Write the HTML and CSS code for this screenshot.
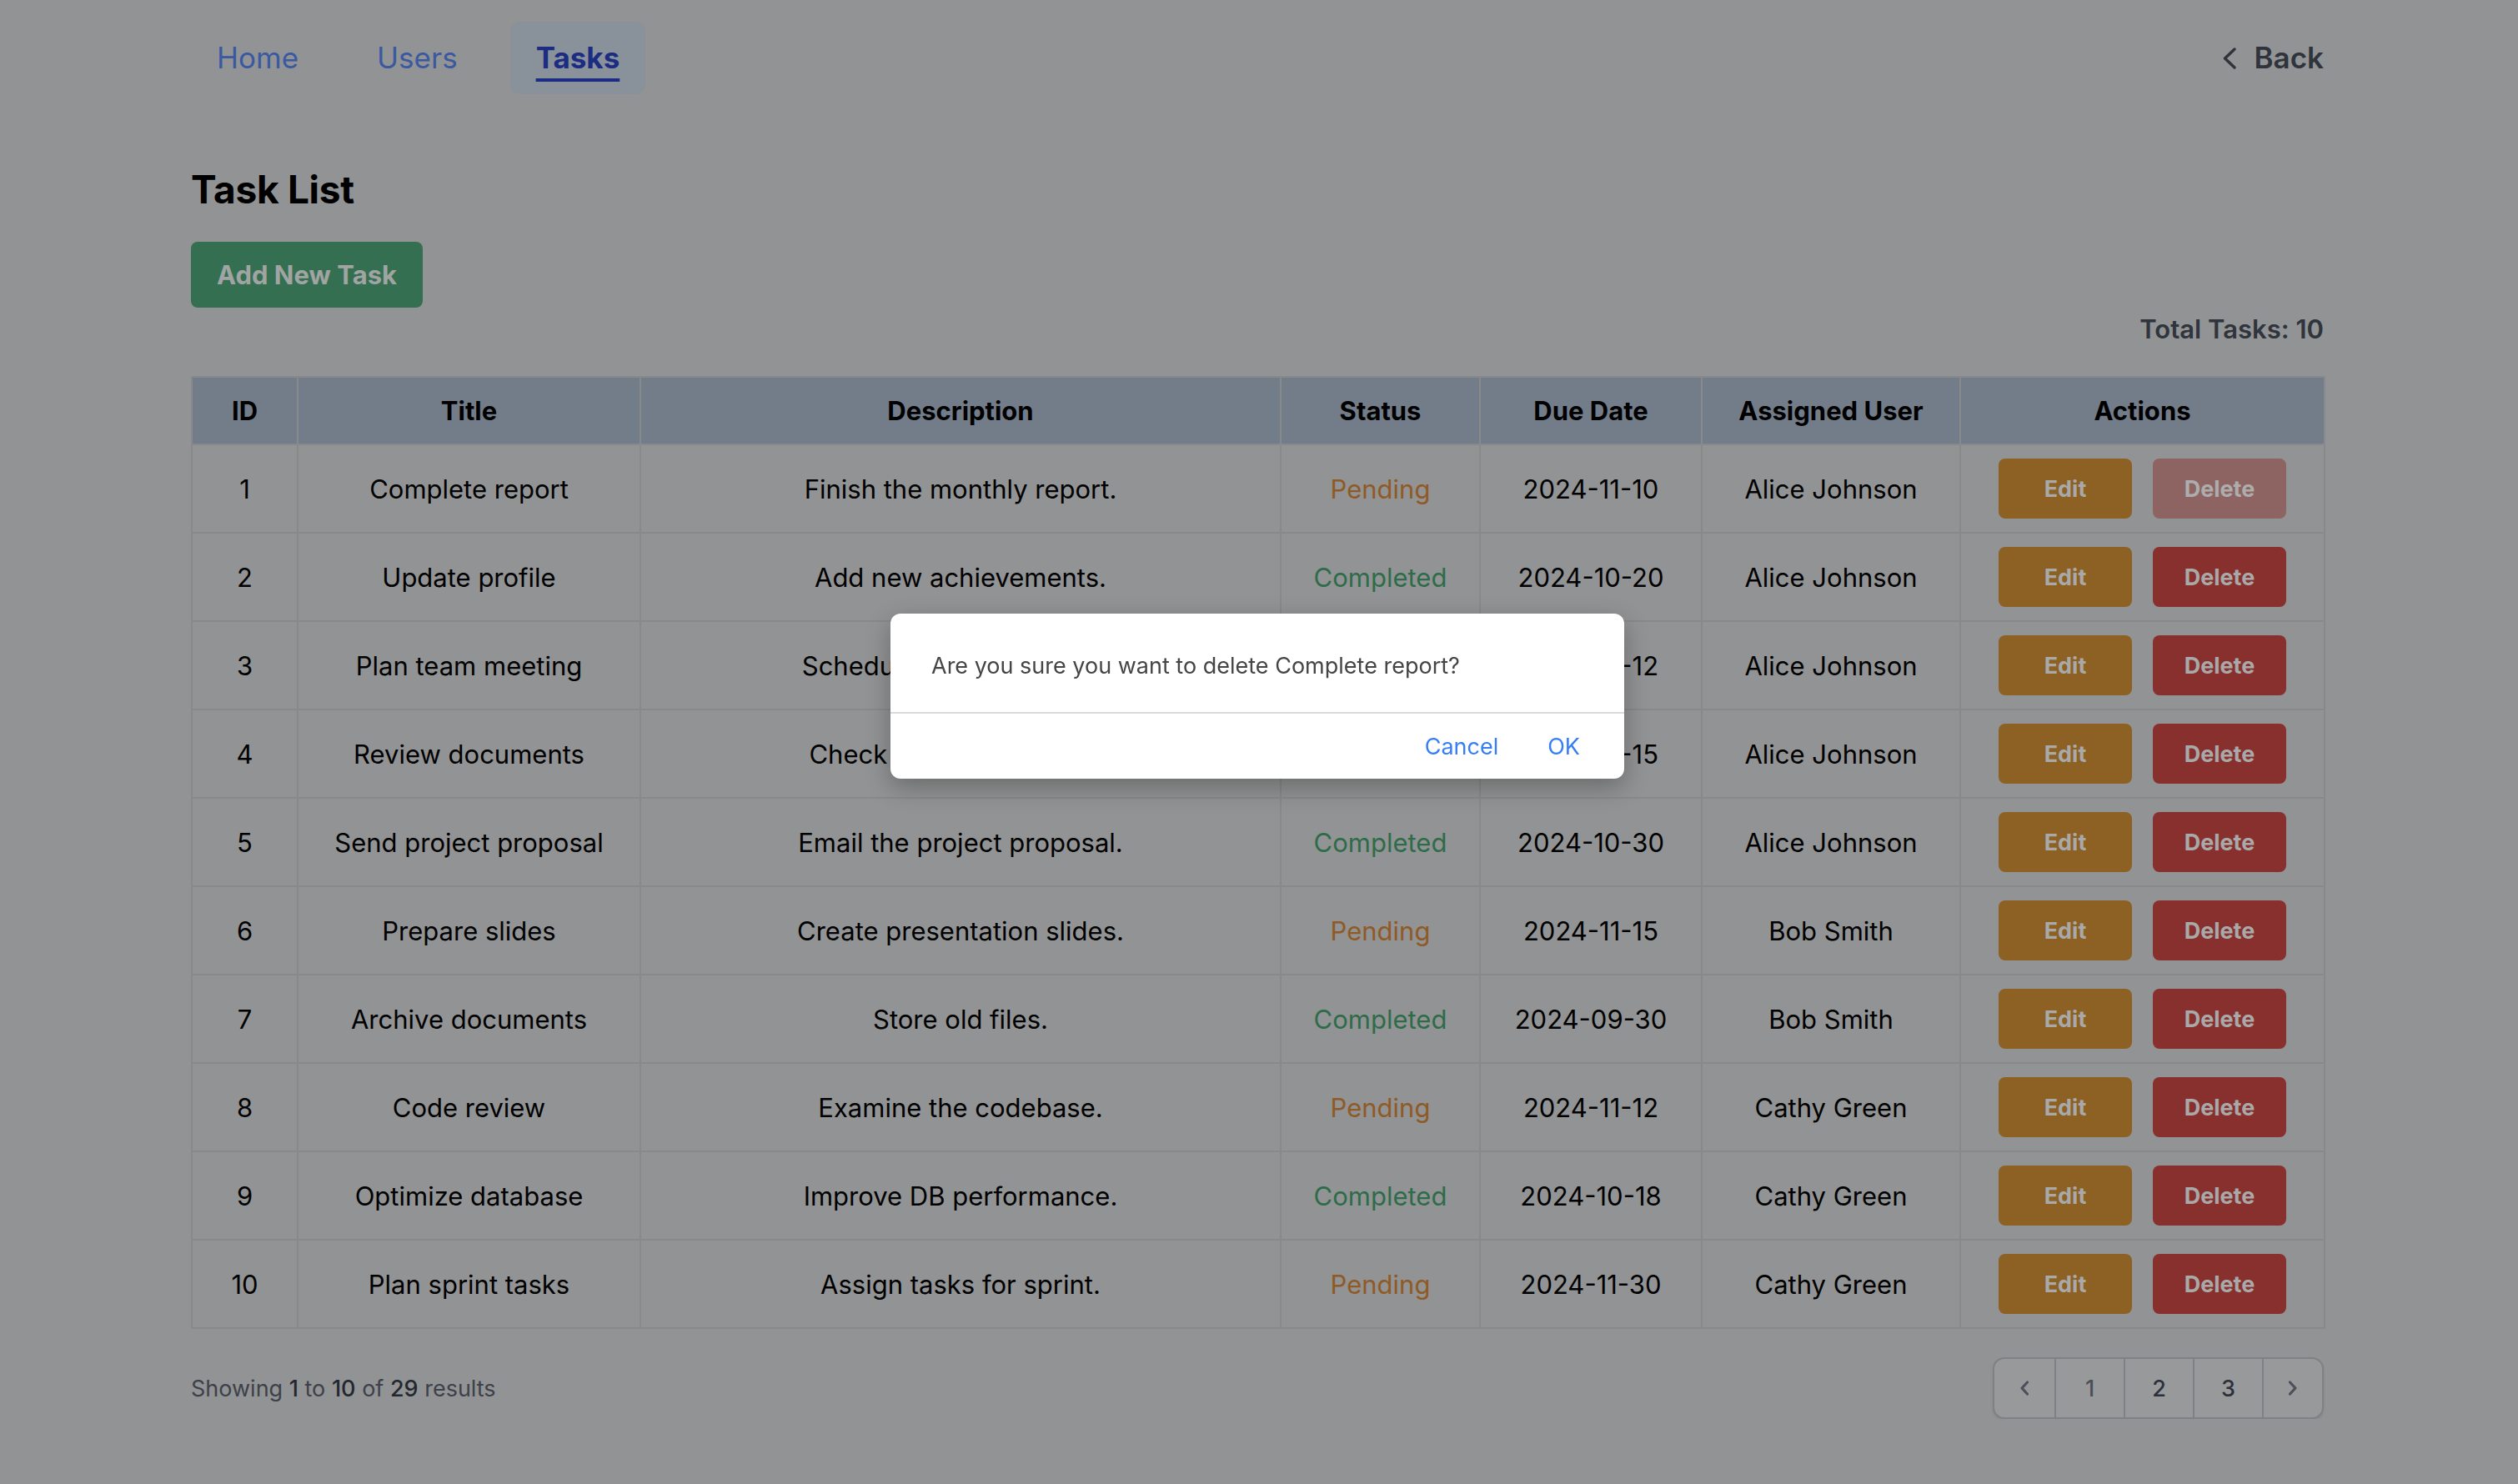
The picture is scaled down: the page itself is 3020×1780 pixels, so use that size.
FILE: index.html
```html
<!DOCTYPE html>
<html lang="en">
<head>
<meta charset="utf-8">
<title>Task List</title>
<link rel="stylesheet" href="styles.css">
</head>
<body>
<div class="page">
  <header class="topnav">
    <nav class="nav-links">
      <a class="nav-link" href="#">Home</a>
      <a class="nav-link" href="#">Users</a>
      <a class="nav-link is-active" href="#">Tasks</a>
    </nav>
    <a class="back" href="#">
      <svg class="back-icon" width="18" height="26" viewBox="0 0 18 26" aria-hidden="true"><path d="M15 2 L3.5 13 L15 24" fill="none" stroke="currentColor" stroke-width="3.4" stroke-linecap="round" stroke-linejoin="round"/></svg>
      <span>Back</span>
    </a>
  </header>

  <main class="content">
    <h1 class="title">Task List</h1>
    <div class="toolbar">
      <button class="btn-add" type="button">Add New Task</button>
    </div>
    <div class="total">Total Tasks: 10</div>

    <table class="tasks">
      <colgroup>
        <col class="c-id"><col class="c-title"><col class="c-desc"><col class="c-status"><col class="c-due"><col class="c-user"><col class="c-actions">
      </colgroup>
      <thead>
        <tr><th>ID</th><th>Title</th><th>Description</th><th>Status</th><th>Due Date</th><th>Assigned User</th><th>Actions</th></tr>
      </thead>
      <tbody>
        <tr><td>1</td><td>Complete report</td><td>Finish the monthly report.</td><td class="st-pending">Pending</td><td>2024-11-10</td><td>Alice Johnson</td><td><div class="actions"><button class="btn btn-edit" type="button">Edit</button><button class="btn btn-delete is-busy" type="button">Delete</button></div></td></tr>
        <tr><td>2</td><td>Update profile</td><td>Add new achievements.</td><td class="st-completed">Completed</td><td>2024-10-20</td><td>Alice Johnson</td><td><div class="actions"><button class="btn btn-edit" type="button">Edit</button><button class="btn btn-delete" type="button">Delete</button></div></td></tr>
        <tr><td>3</td><td>Plan team meeting</td><td>Schedule a team meeting.</td><td class="st-pending">Pending</td><td>2024-11-12</td><td>Alice Johnson</td><td><div class="actions"><button class="btn btn-edit" type="button">Edit</button><button class="btn btn-delete" type="button">Delete</button></div></td></tr>
        <tr><td>4</td><td>Review documents</td><td>Check documents again.</td><td class="st-completed">Completed</td><td>2024-11-15</td><td>Alice Johnson</td><td><div class="actions"><button class="btn btn-edit" type="button">Edit</button><button class="btn btn-delete" type="button">Delete</button></div></td></tr>
        <tr><td>5</td><td>Send project proposal</td><td>Email the project proposal.</td><td class="st-completed">Completed</td><td>2024-10-30</td><td>Alice Johnson</td><td><div class="actions"><button class="btn btn-edit" type="button">Edit</button><button class="btn btn-delete" type="button">Delete</button></div></td></tr>
        <tr><td>6</td><td>Prepare slides</td><td>Create presentation slides.</td><td class="st-pending">Pending</td><td>2024-11-15</td><td>Bob Smith</td><td><div class="actions"><button class="btn btn-edit" type="button">Edit</button><button class="btn btn-delete" type="button">Delete</button></div></td></tr>
        <tr><td>7</td><td>Archive documents</td><td>Store old files.</td><td class="st-completed">Completed</td><td>2024-09-30</td><td>Bob Smith</td><td><div class="actions"><button class="btn btn-edit" type="button">Edit</button><button class="btn btn-delete" type="button">Delete</button></div></td></tr>
        <tr><td>8</td><td>Code review</td><td>Examine the codebase.</td><td class="st-pending">Pending</td><td>2024-11-12</td><td>Cathy Green</td><td><div class="actions"><button class="btn btn-edit" type="button">Edit</button><button class="btn btn-delete" type="button">Delete</button></div></td></tr>
        <tr><td>9</td><td>Optimize database</td><td>Improve DB performance.</td><td class="st-completed">Completed</td><td>2024-10-18</td><td>Cathy Green</td><td><div class="actions"><button class="btn btn-edit" type="button">Edit</button><button class="btn btn-delete" type="button">Delete</button></div></td></tr>
        <tr><td>10</td><td>Plan sprint tasks</td><td>Assign tasks for sprint.</td><td class="st-pending">Pending</td><td>2024-11-30</td><td>Cathy Green</td><td><div class="actions"><button class="btn btn-edit" type="button">Edit</button><button class="btn btn-delete" type="button">Delete</button></div></td></tr>
      </tbody>
    </table>

    <div class="table-footer">
      <p class="summary">Showing <b>1</b> to <b>10</b> of <b>29</b> results</p>
      <nav class="pager" aria-label="Pagination">
        <a class="pager-item pager-arrow" href="#" aria-label="Previous"><svg width="14" height="20" viewBox="0 0 14 20" aria-hidden="true"><path d="M10.5 3 L4 10 L10.5 17" fill="none" stroke="currentColor" stroke-width="3.2" stroke-linecap="round" stroke-linejoin="round"/></svg></a>
        <a class="pager-item pager-num is-current" href="#">1</a>
        <a class="pager-item pager-num" href="#">2</a>
        <a class="pager-item pager-num" href="#">3</a>
        <a class="pager-item pager-arrow" href="#" aria-label="Next"><svg width="14" height="20" viewBox="0 0 14 20" aria-hidden="true"><path d="M3.5 3 L10 10 L3.5 17" fill="none" stroke="currentColor" stroke-width="3.2" stroke-linecap="round" stroke-linejoin="round"/></svg></a>
      </nav>
    </div>
  </main>
</div>

<div class="dialog" role="alertdialog" aria-modal="true">
  <div class="dialog-body">Are you sure you want to delete Complete report?</div>
  <div class="dialog-footer">
    <button class="dialog-btn" type="button">Cancel</button>
    <button class="dialog-btn" type="button">OK</button>
  </div>
</div>
</body>
</html>
```
FILE: styles.css
```css
* { box-sizing: border-box; }

body {
  margin: 0;
  background: #929394;
  font-family: Inter, "Noto Sans", "Liberation Sans", sans-serif;
  color: #000;
}

.page {
  padding: 0 233px 0 229px;
}

/* top navigation */
.topnav {
  display: flex;
  justify-content: space-between;
  align-items: center;
  padding-top: 26px;
}

.nav-links {
  display: flex;
  gap: 32px;
}

.nav-link {
  display: block;
  padding: 16px 31px;
  font-size: 35px;
  line-height: 55px;
  color: #3a59a1;
  text-decoration: none;
  border-radius: 12px;
}

.nav-link.is-active {
  background: #89929b;
  color: #1c2c82;
  font-weight: 700;
  text-decoration: underline;
  text-decoration-thickness: 4px;
  text-underline-offset: 12px;
}

.back {
  display: flex;
  align-items: center;
  gap: 21px;
  font-size: 35px;
  line-height: 55px;
  font-weight: 600;
  color: #2e333c;
  text-decoration: none;
}

.back-icon { display: block; }

/* heading area */
.title {
  margin: 83px 0 0;
  font-size: 46px;
  line-height: 62px;
  font-weight: 700;
  letter-spacing: -0.3px;
}

.toolbar {
  display: flex;
  margin-top: 32px;
}

.btn-add {
  padding: 16px 31px;
  border: 0;
  border-radius: 8px;
  background: #346f51;
  color: #a0a4a2;
  font-family: inherit;
  font-size: 31px;
  line-height: 47px;
  font-weight: 700;
}

.total {
  margin-top: 3px;
  text-align: right;
  font-size: 31px;
  line-height: 46px;
  font-weight: 600;
  color: #2f343d;
}

/* table */
.tasks {
  width: 100%;
  margin-top: 33px;
  border-collapse: collapse;
  table-layout: fixed;
  font-size: 31px;
}

.c-id { width: 127px; }
.c-title { width: 411px; }
.c-desc { width: 768px; }
.c-status { width: 239px; }
.c-due { width: 266px; }
.c-user { width: 310px; }
.c-actions { width: 437px; }

.tasks th,
.tasks td {
  border: 2px solid #88898b;
  text-align: center;
  vertical-align: middle;
  padding: 0 12px;
  white-space: nowrap;
}

.tasks th {
  height: 81px;
  background: #737d8a;
  font-weight: 700;
}

.tasks td {
  height: 106px;
  font-weight: 400;
}

.st-pending { color: #8f5a26; }
.st-completed { color: #2e6c49; }

.actions {
  display: flex;
  justify-content: center;
  gap: 25px;
}

.btn {
  width: 160px;
  height: 72px;
  border: 0;
  border-radius: 8px;
  font-family: inherit;
  font-size: 27px;
  font-weight: 700;
  color: #a9a9a9;
}

.btn-edit { background: #8d6023; }
.btn-delete { background: #88302e; }
.btn-delete.is-busy { background: #8e6462; color: #adadad; }

/* footer / pagination */
.table-footer {
  display: flex;
  justify-content: space-between;
  align-items: center;
  margin-top: 34px;
}

.summary {
  margin: 0;
  font-size: 27px;
  color: #3d4149;
}

.summary b {
  font-weight: 500;
  color: #23272e;
}

.pager {
  display: flex;
  border: 2px solid #7f8185;
  border-radius: 14px;
  background: #98999a;
  box-shadow: 0 2px 3px rgba(0, 0, 0, 0.08);
  overflow: hidden;
}

.pager-item {
  display: flex;
  align-items: center;
  justify-content: center;
  height: 70px;
  font-size: 27px;
  font-weight: 500;
  color: #2b303a;
  text-decoration: none;
}

.pager-item + .pager-item { border-left: 2px solid #7f8185; }

.pager-arrow { width: 72px; color: #4b5059; }
.pager-num { width: 83px; }
.pager-num.is-current { color: #4a4f58; }

/* confirm dialog */
.dialog {
  position: fixed;
  top: 736px;
  left: calc(50% - 442px);
  width: 880px;
  background: #fff;
  border-radius: 12px;
  box-shadow: 0 10px 30px rgba(0, 0, 0, 0.28);
  overflow: hidden;
}

.dialog-body {
  display: flex;
  align-items: center;
  height: 118px;
  padding: 6px 49px 0;
  font-size: 27px;
  color: #454545;
}

.dialog-footer {
  display: flex;
  justify-content: flex-end;
  align-items: center;
  gap: 59px;
  height: 80px;
  padding-right: 53px;
  border-top: 2px solid #dadada;
}

.dialog-btn {
  padding: 0;
  border: 0;
  background: none;
  font-family: inherit;
  font-size: 27px;
  color: #357ef6;
}
```
